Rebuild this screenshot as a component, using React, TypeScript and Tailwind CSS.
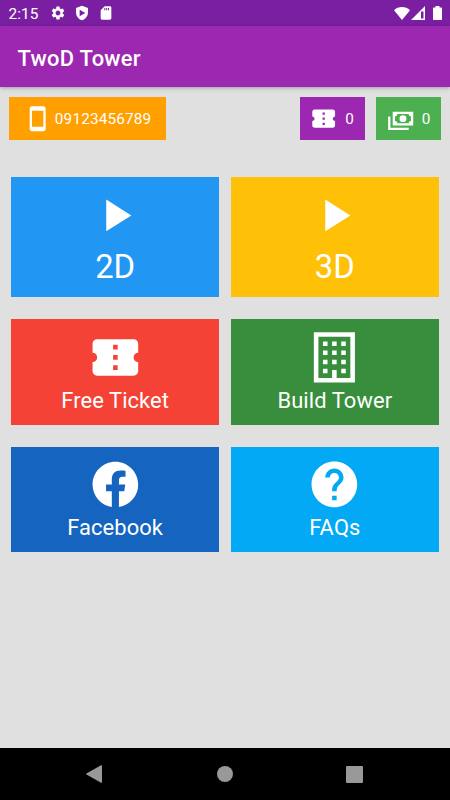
import type { ReactNode } from 'react';

const icons = {
    play: 'M8 5v14l11-7z',
    ticket: 'M22 10V6c0-1.11-.9-2-2-2H4c-1.1 0-1.99.89-1.99 2v4c1.1 0 1.99.9 1.99 2s-.89 2-2 2v4c0 1.1.9 2 2 2h16c1.1 0 2-.9 2-2v-4c-1.1 0-2-.9-2-2s.9-2 2-2zm-9 7.5h-2v-2h2v2zm0-4.5h-2v-2h2v2zm0-4.5h-2v-2h2v2z',
    building: 'M3 1h18v22H3zM5 3v18h6v-3.5h2V21h6V3zM7 5h2v2H7zM11 5h2v2h-2zM15 5h2v2h-2zM7 9h2v2H7zM11 9h2v2h-2zM15 9h2v2h-2zM7 13h2v2H7zM11 13h2v2h-2zM15 13h2v2h-2zM7 17h2v2H7zM15 17h2v2h-2z',
    facebook: 'M12 2.04C6.5 2.04 2 6.53 2 12.06C2 17.06 5.66 21.21 10.44 21.96V14.96H7.9V12.06H10.44V9.85C10.44 7.34 11.93 5.96 14.22 5.96C15.31 5.96 16.45 6.15 16.45 6.15V8.62H15.19C13.95 8.62 13.56 9.39 13.56 10.22V12.06H16.34L15.89 14.96H13.56V21.96A10 10 0 0 0 22 12.06C22 6.53 17.5 2.04 12 2.04Z',
    help: 'M12 2C6.48 2 2 6.48 2 12s4.48 10 10 10 10-4.48 10-10S17.52 2 12 2zm1 17h-2v-2h2v2zm2.07-7.75l-.9.92C13.45 12.9 13 13.5 13 15h-2v-.5c0-1.1.45-2.1 1.17-2.83l1.24-1.26c.37-.36.59-.86.59-1.41 0-1.1-.9-2-2-2s-2 .9-2 2H8c0-2.21 1.79-4 4-4s4 1.79 4 4c0 .88-.36 1.68-.93 2.25z',
    phone: 'M17 1.01L7 1c-1.1 0-2 .9-2 2v18c0 1.1.9 2 2 2h10c1.1 0 2-.9 2-2V3c0-1.1-.9-1.99-2-1.99zM17 19H7V5h10v14z',
    cash: 'M5 6H23V18H5V6M14 9A3 3 0 0 1 17 12A3 3 0 0 1 14 15A3 3 0 0 1 11 12A3 3 0 0 1 14 9M9 8A2 2 0 0 1 7 10V14A2 2 0 0 1 9 16H19A2 2 0 0 1 21 14V10A2 2 0 0 1 19 8H9M1 10H3V20H19V22H1V10Z',
    settings: 'M19.14 12.94c.04-.3.06-.61.06-.94 0-.32-.02-.64-.07-.94l2.03-1.58c.18-.14.23-.41.12-.61l-1.92-3.32c-.12-.22-.37-.29-.59-.22l-2.39.96c-.5-.38-1.03-.7-1.62-.94l-.36-2.54c-.04-.24-.24-.41-.48-.41h-3.84c-.24 0-.43.17-.47.41l-.36 2.54c-.59.24-1.13.57-1.62.94l-2.39-.96c-.22-.08-.47 0-.59.22L2.74 8.87c-.12.21-.08.47.12.61l2.03 1.58c-.05.3-.09.63-.09.94s.02.64.07.94l-2.03 1.58c-.18.14-.23.41-.12.61l1.92 3.32c.12.22.37.29.59.22l2.39-.96c.5.38 1.03.7 1.62.94l.36 2.54c.05.24.24.41.48.41h3.84c.24 0 .44-.17.47-.41l.36-2.54c.59-.24 1.13-.56 1.62-.94l2.39.96c.22.08.47 0 .59-.22l1.92-3.32c.12-.22.07-.47-.12-.61l-2.01-1.58zM12 15.6c-1.98 0-3.6-1.62-3.6-3.6s1.62-3.6 3.6-3.6 3.6 1.62 3.6 3.6-1.62 3.6-3.6 3.6z',
    shield: 'M12 1L3 4.5V11c0 5.55 3.84 10.74 9 12 5.16-1.26 9-6.45 9-12V4.5zM8.5 7v10l8.5-5z',
    sdCard: 'M18 2h-8L4 8v12c0 1.1.9 2 2 2h12c1.1 0 2-.9 2-2V4c0-1.1-.9-2-2-2zM9.5 4.5h1.5v3.5h-1.5zM12.3 4.5h1.5v3.5h-1.5zM15.1 4.5h1.5v3.5h-1.5z',
};

function Icon({ name, className }: { name: keyof typeof icons; className: string }) {
    return (
        <svg viewBox="0 0 24 24" fill="currentColor" fillRule="evenodd" className={`shrink-0 ${className}`}>
            <path d={icons[name]} />
        </svg>
    );
}

function StatusBar() {
    return (
        <div className="flex h-[26px] items-center bg-[#7b1fa2] pl-[8.5px] pr-2">
            <span className="w-[41.5px] pt-[3px] text-[15.33px] leading-none tracking-[0.1px]">2:15</span>
            <Icon name="settings" className="size-4" />
            <Icon name="shield" className="ml-2 size-4" />
            <Icon name="sdCard" className="ml-2 size-4" />
            <svg viewBox="0 0 16 13" fill="currentColor" className="ml-auto h-[13px] w-4">
                <path d="M8 13L0 3.2C2.2 1.2 5 0 8 0s5.8 1.2 8 3.2z" />
            </svg>
            <svg viewBox="0 0 14 14" fill="currentColor" fillRule="evenodd" className="ml-px size-3.5">
                <path d="M14 0v14H0zM10 5.5v7h2.5V5.5z" />
            </svg>
            <svg viewBox="0 0 9 14" fill="currentColor" className="ml-2 h-3.5 w-[9px]">
                <path d="M2.5 0h4v1.5H8.2q.8 0 .8.8v10.9q0 .8-.8.8H.8q-.8 0-.8-.8V2.3q0-.8.8-.8h1.7z" />
            </svg>
        </div>
    );
}

function Chip({ className, children }: { className: string; children: ReactNode }) {
    return <div className={`flex h-[43.5px] items-center text-[15.33px] tracking-[0.15px] ${className}`}>{children}</div>;
}

function Tile({ icon, label, className, big }: { icon: keyof typeof icons; label: string; className: string; big?: boolean }) {
    return (
        <button className={`flex flex-col items-center ${big ? 'h-[120px] pt-[10.5px]' : 'h-[105.5px] pt-[10.5px]'} ${className}`}>
            <Icon name={icon} className="size-[54.75px]" />
            <span className={big ? 'mt-[5px] text-[32.85px] leading-[38px]' : 'mt-[3.3px] text-[21.9px] leading-[26px] tracking-[0.1px]'}>{label}</span>
        </button>
    );
}

export default function App() {
    return (
        <div className="flex h-[800px] w-[450px] flex-col overflow-hidden bg-[#e0e0e0] font-[Roboto,sans-serif] text-white">
            <StatusBar />
            <header className="z-10 flex h-[61px] items-center bg-[#9c27b0] pl-[17.5px] pt-1 shadow-[0_1px_4px_rgba(0,0,0,0.3)]">
                <h1 className="text-[21.9px] font-medium leading-none tracking-[0.27px]">TwoD Tower</h1>
            </header>

            {/* Account summary */}
            <div className="flex px-[9px] pt-[9.5px]">
                <Chip className="w-[157.3px] bg-[#ffa000] pl-[14.5px]">
                    <Icon name="phone" className="size-[27.37px]" />
                    <span className="ml-1 pt-[2.5px]">09123456789</span>
                </Chip>
                <Chip className="ml-auto w-[65px] bg-[#9c27b0] pl-[10px]">
                    <Icon name="ticket" className="size-[27.37px]" />
                    <span className="ml-2 pt-[2.5px]">0</span>
                </Chip>
                <Chip className="ml-[11px] w-[65px] bg-[#4caf50] pl-[10.5px]">
                    <Icon name="cash" className="size-[27.37px]" />
                    <span className="ml-2 pt-[2.5px]">0</span>
                </Chip>
            </div>

            {/* Main menu */}
            <main className="grid grid-cols-2 gap-x-[11.4px] gap-y-[22px] px-[11px] pt-[37.3px]">
                <Tile icon="play" label="2D" className="bg-[#2196f3]" big />
                <Tile icon="play" label="3D" className="bg-[#ffc107]" big />
                <Tile icon="ticket" label="Free Ticket" className="bg-[#f44336]" />
                <Tile icon="building" label="Build Tower" className="bg-[#388e3c]" />
                <Tile icon="facebook" label="Facebook" className="bg-[#1565c0]" />
                <Tile icon="help" label="FAQs" className="bg-[#03a9f4]" />
            </main>

            {/* System navigation */}
            <nav className="mt-auto flex h-[52px] items-center justify-between bg-black pl-[86px] pr-[87px] text-[#999]">
                <svg viewBox="0 0 16 18" fill="currentColor" className="h-[18px] w-4">
                    <path d="M15 .3q1-.5 1 .5v16.4q0 1-1 .5L.5 9.5q-.8-.5 0-1z" />
                </svg>
                <span className="ml-px size-4 rounded-full bg-[#999]" />
                <span className="size-[17px] rounded-[1px] bg-[#999]" />
            </nav>
        </div>
    );
}
